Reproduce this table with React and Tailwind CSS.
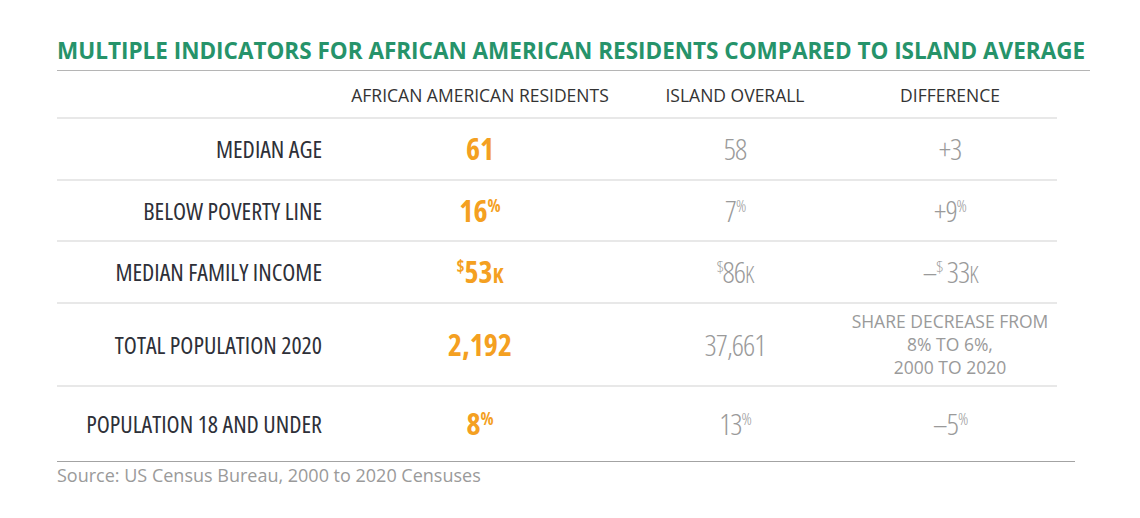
const cond = "font-['Open_Sans',sans-serif] [font-stretch:75%]";
const norm = "font-['Open_Sans',sans-serif]";

const Sup = ({ children, className = "" }) => (
  <span className={`relative -top-[10px] text-[17px] ${className}`}>{children}</span>
);

const Orange = ({ children }) => (
  <span className={`${cond} text-[30px] font-bold text-[#f4a021] leading-none`}>{children}</span>
);

const Gray = ({ children }) => (
  <span className={`${cond} text-[30px] tracking-[-1px] font-light text-[#9a9a9a] leading-none`}>{children}</span>
);

const ROWS = [
  {
    label: "MEDIAN AGE",
    h: "h-[62px]",
    a: <Orange>61</Orange>,
    b: <Gray>58</Gray>,
    c: <Gray>+3</Gray>,
  },
  {
    label: "BELOW POVERTY LINE",
    h: "h-[61px]",
    a: <Orange>16<Sup>%</Sup></Orange>,
    b: <Gray>7<Sup>%</Sup></Gray>,
    c: <Gray>+9<Sup>%</Sup></Gray>,
  },
  {
    label: "MEDIAN FAMILY INCOME",
    h: "h-[62px]",
    a: <Orange><Sup className="text-[15px]">$</Sup>53<span className="text-[21px]">K</span></Orange>,
    b: <Gray><Sup className="text-[15px]">$</Sup>86<span className="text-[23px]">K</span></Gray>,
    c: <Gray>–<Sup className="text-[15px]">$</Sup> 33<span className="text-[23px]">K</span></Gray>,
  },
  {
    label: "TOTAL POPULATION 2020",
    h: "h-[83px]",
    a: <Orange>2,192</Orange>,
    b: <Gray>37,661</Gray>,
    c: (
      <div className={`${norm} text-[17.5px] leading-[23px] text-[#9a9a9a] text-center`}>
        SHARE DECREASE FROM<br />8% TO 6%,<br />2000 TO 2020
      </div>
    ),
  },
  {
    label: "POPULATION 18 AND UNDER",
    h: "h-[74px]",
    a: <Orange>8<Sup>%</Sup></Orange>,
    b: <Gray>13<Sup>%</Sup></Gray>,
    c: <Gray>–5<Sup>%</Sup></Gray>,
    last: true,
  },
];

export default function App() {
  return (
    <div className="w-[1140px] h-[518px] bg-white pl-[57px] pt-[36px]">
      <div className="w-[1033px] border-b border-[#b5b5b5] h-[35px]">
        <h1 className={`${norm} text-[22.5px] leading-[30px] font-bold text-[#26936a] whitespace-nowrap`}>
          MULTIPLE INDICATORS FOR AFRICAN AMERICAN RESIDENTS COMPARED TO ISLAND AVERAGE
        </h1>
      </div>

      <div className="w-[1000px]">
        <div className={`grid grid-cols-[265px_316px_194px_236px] items-center h-[48px] pt-[3px] border-b-2 border-[#e8e8e8] ${norm} text-[17.5px] text-[#333]`}>
          <span />
          <span className="text-center">AFRICAN AMERICAN RESIDENTS</span>
          <span className="text-center">ISLAND OVERALL</span>
          <span className="text-center">DIFFERENCE</span>
        </div>

        {ROWS.map((r) => (
          <div
            key={r.label}
            className={`grid grid-cols-[265px_316px_194px_236px] items-center ${r.h} ${r.last ? "" : "border-b-2 border-[#e8e8e8]"}`}
          >
            <span className={`${cond} text-[24px] text-[#2e3038] text-right leading-none`}>{r.label}</span>
            <div className="flex justify-center">{r.a}</div>
            <div className="flex justify-center">{r.b}</div>
            <div className="flex justify-center">{r.c}</div>
          </div>
        ))}
      </div>
      <div className="w-[1018px] border-b border-[#a3a3a3]" />
      <p className={`${norm} text-[18px] leading-[26px] text-[#9a9a9a]`}>
        Source: US Census Bureau, 2000 to 2020 Censuses
      </p>
    </div>
  );
}
